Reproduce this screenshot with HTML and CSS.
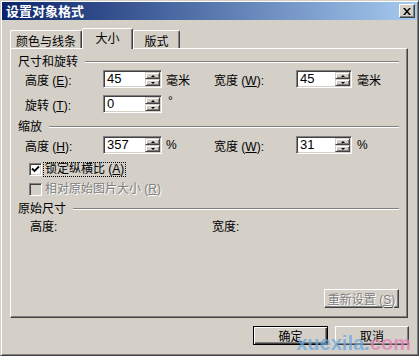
FILE: index.html
```html
<!DOCTYPE html>
<html>
<head>
<meta charset="utf-8">
<link rel="stylesheet" href="styles.css">
</head>
<body>
<div class="win">
  <div class="title">
    <span class="title-text">设置对象格式</span>
    <span class="close"><svg width="8" height="7" viewBox="0 0 8 7"><path d="M0 0h2l2 2.5L6 0h2L5 3.5 8 7H6L4 4.5 2 7H0l3-3.5z" fill="#000"/></svg></span>
  </div>
  <div class="tabs">
    <div class="tab t1">颜色与线条</div>
    <div class="tab active">大小</div>
    <div class="tab t3">版式</div>
  </div>
  <div class="panel">
    <div class="group g1"><span>尺寸和旋转</span><i class="etch"></i></div>
    <div class="row r1">
      <span class="lbl">高度 (<u>E</u>):</span>
      <span class="spin"><span class="val">45</span><span class="arrows"><b class="up"><i></i></b><b class="dn"><i></i></b></span></span>
      <span class="unit">毫米</span>
      <span class="lbl2">宽度 (<u>W</u>):</span>
      <span class="spin s2"><span class="val">45</span><span class="arrows"><b class="up"><i></i></b><b class="dn"><i></i></b></span></span>
      <span class="unit u2">毫米</span>
    </div>
    <div class="row r2">
      <span class="lbl">旋转 (<u>T</u>):</span>
      <span class="spin"><span class="val">0</span><span class="arrows"><b class="up"><i></i></b><b class="dn"><i></i></b></span></span>
      <span class="unit deg">°</span>
    </div>
    <div class="group g2"><span>缩放</span><i class="etch"></i></div>
    <div class="row r3">
      <span class="lbl">高度 (<u>H</u>):</span>
      <span class="spin"><span class="val">357</span><span class="arrows"><b class="up"><i></i></b><b class="dn"><i></i></b></span></span>
      <span class="unit">%</span>
      <span class="lbl2">宽度 (<u>W</u>):</span>
      <span class="spin s2"><span class="val">31</span><span class="arrows"><b class="up"><i></i></b><b class="dn"><i></i></b></span></span>
      <span class="unit u2">%</span>
    </div>
    <div class="check c1">
      <span class="cb"><svg width="9" height="9" viewBox="0 0 9 9"><path d="M1 3.5l2.5 2.5L8 1.5" stroke="#000" stroke-width="1.8" fill="none"/></svg></span>
      <span class="ctext focus">锁定纵横比 (<u>A</u>)</span>
    </div>
    <div class="check c2">
      <span class="cb dis"></span>
      <span class="ctext distext">相对原始图片大小 (<u>R</u>)</span>
    </div>
    <div class="group g3"><span>原始尺寸</span><i class="etch"></i></div>
    <div class="orig">
      <span class="o1">高度:</span>
      <span class="o2">宽度:</span>
    </div>
    <div class="btn reset"><span class="distext">重新设置 (<u>S</u>)</span></div>
  </div>
  <div class="buttons">
    <div class="btn ok"><span>确定</span></div>
    <div class="btn cancel"><span>取消</span></div>
  </div>
  <div class="wm"><span class="wb">xuexila.</span><span class="wp">com</span></div>
</div>
</body>
</html>
```
FILE: styles.css
```css
* { box-sizing: border-box; }
html, body { margin: 0; padding: 0; }
body {
  width: 419px; height: 356px; overflow: hidden;
  background: #d4d0c8;
  font-family: "Liberation Sans", "Noto Sans CJK SC", sans-serif;
  font-size: 12px; color: #000;
}
u { text-decoration: underline; }
.win {
  width: 419px; height: 356px; position: relative;
  display: flex; flex-direction: column;
  border: 1px solid; border-color: #d4d0c8 #404040 #404040 #d4d0c8;
  box-shadow: inset 1px 1px #fff, inset -1px -1px #808080;
  padding: 1px;
}
.title {
  height: 18px; display: flex; align-items: center;
  padding: 0 2px 0 4px;
  background: linear-gradient(to right, #0a246a, #a6caf0);
}
.title-text {
  color: #fff; font-weight: bold; font-size: 13px;
  font-family: "Noto Sans CJK SC", sans-serif; line-height: 16px;
}
.close {
  margin-left: auto; width: 16px; height: 14px;
  display: flex; align-items: center; justify-content: center;
  background: #d4d0c8;
  border: 1px solid; border-color: #fff #404040 #404040 #fff;
  box-shadow: inset -1px -1px #808080;
}
.tabs {
  margin-top: 8px; height: 20px; display: flex; align-items: flex-end;
  padding-left: 8px;
}
.tab {
  height: 18px; background: #d4d0c8;
  border-top: 1px solid #fff; border-left: 1px solid #fff;
  border-right: 1px solid #404040;
  box-shadow: inset -1px 0 #808080;
  border-radius: 2px 2px 0 0;
  text-align: center; line-height: 14px; padding-top: 3px;
  font-family: "Noto Sans CJK SC", sans-serif;
}
.t1 { width: 72px; }
.t3 { width: 47px; }
.active {
  width: 51px; height: 21px; margin-bottom: -1px;
  position: relative; z-index: 1; padding-top: 2px;
}
.panel {
  margin-left: 8px; width: 398px; height: 270px;
  display: flex; flex-direction: column;
  border-top: 1px solid #fff; border-left: 1px solid #fff;
  border-right: 1px solid #404040; border-bottom: 1px solid #404040;
  box-shadow: inset -1px -1px #808080;
}
.group {
  height: 14px; display: flex; align-items: center;
  margin-left: 7px; margin-right: 8px; line-height: 14px;
}
.etch {
  flex: 1; height: 2px; margin-left: 7px;
  border-top: 1px solid #808080; border-bottom: 1px solid #fff;
}
.g1 { margin-top: 6px; }
.g2 { margin-top: 7px; }
.g3 { margin-top: 6px; }
.row { height: 18px; display: flex; align-items: center; padding-left: 14px; }
.r1 { margin-top: 1px; }
.r2 { margin-top: 7px; }
.r3 { margin-top: 2px; }
.lbl { width: 78px; }
.lbl2 { width: 82px; }
.unit { margin-left: 4px; width: 48px; }
.u2 { margin-left: 5px; }
.deg { margin-left: 6px; margin-top: -6px; font-size: 12px; }
.spin {
  width: 59px; height: 18px; display: flex;
  background: #fff;
  border: 1px solid; border-color: #808080 #fff #fff #808080;
  box-shadow: inset 1px 1px #404040, inset -1px -1px #d4d0c8;
  padding: 1px;
}
.s2 { width: 56px; }
.val { flex: 1; padding-left: 2px; font-size: 13px; line-height: 14px; }
.arrows { width: 15px; display: flex; flex-direction: column; }
.arrows b {
  flex: 1; background: #d4d0c8; display: flex; align-items: center; justify-content: center;
  border: 1px solid; border-color: #d4d0c8 #404040 #404040 #d4d0c8;
  box-shadow: inset 1px 1px #fff, inset -1px -1px #808080;
}
.arrows i { width: 0; height: 0; border-left: 2px solid transparent; border-right: 2px solid transparent; }
.up i { border-bottom: 2px solid #000; }
.dn i { border-top: 2px solid #000; }
.check { height: 14px; display: flex; align-items: center; margin-left: 18px; }
.c1 { margin-top: 8px; }
.c2 { margin-top: 6px; }
.cb {
  width: 13px; height: 13px; background: #fff;
  display: flex; align-items: center; justify-content: center;
  border: 1px solid; border-color: #808080 #fff #fff #808080;
  box-shadow: inset 1px 1px #404040, inset -1px -1px #d4d0c8;
}
.cb.dis { background: #d4d0c8; }
.ctext { margin-left: 2px; padding: 0 1px; line-height: 13px; }
.focus { outline: 1px dotted #000; }
.distext { color: #808080; text-shadow: 1px 1px #fff; }
.orig { margin-top: 4px; height: 14px; display: flex; padding-left: 19px; line-height: 14px; }
.o1 { width: 182px; }
.btn {
  height: 19px; display: flex; align-items: center; justify-content: center;
  background: #d4d0c8;
  border: 1px solid; border-color: #fff #404040 #404040 #fff;
  box-shadow: inset -1px -1px #808080;
}
.reset { width: 75px; margin-top: auto; align-self: flex-end; margin-right: 8px; margin-bottom: 9px; }
.buttons {
  margin-top: 8px; display: flex; justify-content: flex-end; gap: 7px; padding-right: 8px;
}
.ok {
  width: 75px; border: 1px solid #000;
  box-shadow: inset 1px 1px #fff, inset -1px -1px #404040, inset -2px -2px #808080;
}
.cancel { width: 74px; }
.wm {
  position: absolute; right: 7px; bottom: 1px;
  font-family: "Liberation Sans", sans-serif; font-weight: bold; font-size: 20px;
  line-height: 22px; opacity: 0.75;
}
.wb { color: #6aa8e0; }
.wp { color: #e57fb6; }
```
